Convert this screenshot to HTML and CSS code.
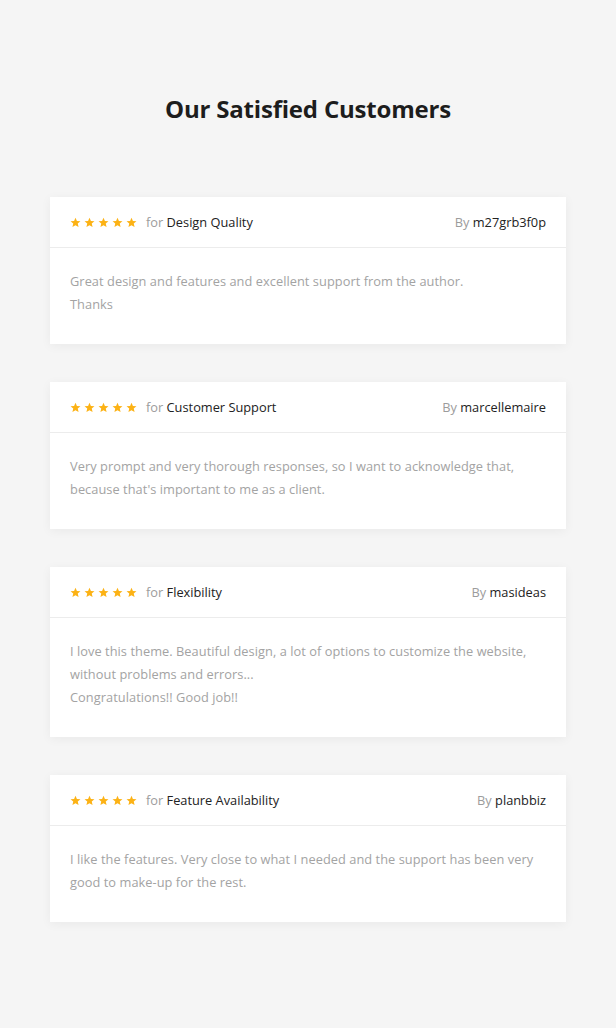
FILE: index.html
```html
<!DOCTYPE html>
<html lang="en">
<head>
    <meta charset="UTF-8">
    <meta name="viewport" content="width=device-width, initial-scale=1.0">
    <title>Our Satisfied Customers</title>
    <link rel="stylesheet" href="styles.css">
</head>
<body>
    <svg width="0" height="0" class="defs">
        <defs>
            <symbol id="star" viewBox="0 0 24 24">
                <path d="M12 1.5l3.1 7.1 7.7.6-5.9 5.1 1.8 7.6L12 17.8l-6.7 4.1 1.8-7.6-5.9-5.1 7.7-.6z"/>
            </symbol>
        </defs>
    </svg>
    <div class="page">
        <h2 class="title">Our Satisfied Customers</h2>

        <div class="review">
            <div class="review-head">
                <div class="rating">
                    <span class="stars">
                        <svg><use href="#star"/></svg><svg><use href="#star"/></svg><svg><use href="#star"/></svg><svg><use href="#star"/></svg><svg><use href="#star"/></svg>
                    </span>
                    <span class="muted">for</span>&nbsp;<span class="dark">Design Quality</span>
                </div>
                <div class="author"><span class="muted">By</span> <span class="dark">m27grb3f0p</span></div>
            </div>
            <div class="review-body">
                Great design and features and excellent support from the author.<br>
                Thanks
            </div>
        </div>

        <div class="review">
            <div class="review-head">
                <div class="rating">
                    <span class="stars">
                        <svg><use href="#star"/></svg><svg><use href="#star"/></svg><svg><use href="#star"/></svg><svg><use href="#star"/></svg><svg><use href="#star"/></svg>
                    </span>
                    <span class="muted">for</span>&nbsp;<span class="dark">Customer Support</span>
                </div>
                <div class="author"><span class="muted">By</span> <span class="dark">marcellemaire</span></div>
            </div>
            <div class="review-body">
                Very prompt and very thorough responses, so I want to acknowledge that,<br>
                because that's important to me as a client.
            </div>
        </div>

        <div class="review">
            <div class="review-head">
                <div class="rating">
                    <span class="stars">
                        <svg><use href="#star"/></svg><svg><use href="#star"/></svg><svg><use href="#star"/></svg><svg><use href="#star"/></svg><svg><use href="#star"/></svg>
                    </span>
                    <span class="muted">for</span>&nbsp;<span class="dark">Flexibility</span>
                </div>
                <div class="author"><span class="muted">By</span> <span class="dark">masideas</span></div>
            </div>
            <div class="review-body">
                I love this theme. Beautiful design, a lot of options to customize the website,<br>
                without problems and errors...<br>
                Congratulations!! Good job!!
            </div>
        </div>

        <div class="review">
            <div class="review-head">
                <div class="rating">
                    <span class="stars">
                        <svg><use href="#star"/></svg><svg><use href="#star"/></svg><svg><use href="#star"/></svg><svg><use href="#star"/></svg><svg><use href="#star"/></svg>
                    </span>
                    <span class="muted">for</span>&nbsp;<span class="dark">Feature Availability</span>
                </div>
                <div class="author"><span class="muted">By</span> <span class="dark">planbbiz</span></div>
            </div>
            <div class="review-body">
                I like the features. Very close to what I needed and the support has been very<br>
                good to make-up for the rest.
            </div>
        </div>
    </div>
</body>
</html>
```

FILE: styles.css
```css
body {
    font-family: 'Open Sans', 'Liberation Sans', sans-serif;
    background-color: #f5f5f5;
    color: #222;
    margin: 0;
    padding: 0;
}
.defs {
    position: absolute;
}
.page {
    width: 516px;
    margin: 0 auto;
    padding: 93px 0 60px;
}
.title {
    margin: 0 0 72px;
    text-align: center;
    font-size: 24px;
    font-weight: 700;
    line-height: 32px;
    color: #1d1d1d;
    letter-spacing: -0.2px;
}
.review {
    background-color: #fff;
    margin-bottom: 38px;
    box-shadow: 0 2px 10px rgba(0,0,0,0.05);
}
.review-head {
    display: flex;
    justify-content: space-between;
    align-items: center;
    height: 50px;
    padding: 0 20px;
    border-bottom: 1px solid #ececec;
    font-size: 12.8px;
}
.rating {
    display: flex;
    align-items: center;
}
.stars {
    display: flex;
    gap: 3px;
    margin-right: 9px;
}
.stars svg {
    width: 11px;
    height: 11px;
    fill: #fcb215;
}
.muted {
    color: #9c9c9c;
}
.dark {
    color: #222;
}
.review-body {
    padding: 22px 20px 28px;
    font-size: 12.8px;
    line-height: 23px;
    color: #a3a3a3;
    letter-spacing: 0.05px;
}
```
